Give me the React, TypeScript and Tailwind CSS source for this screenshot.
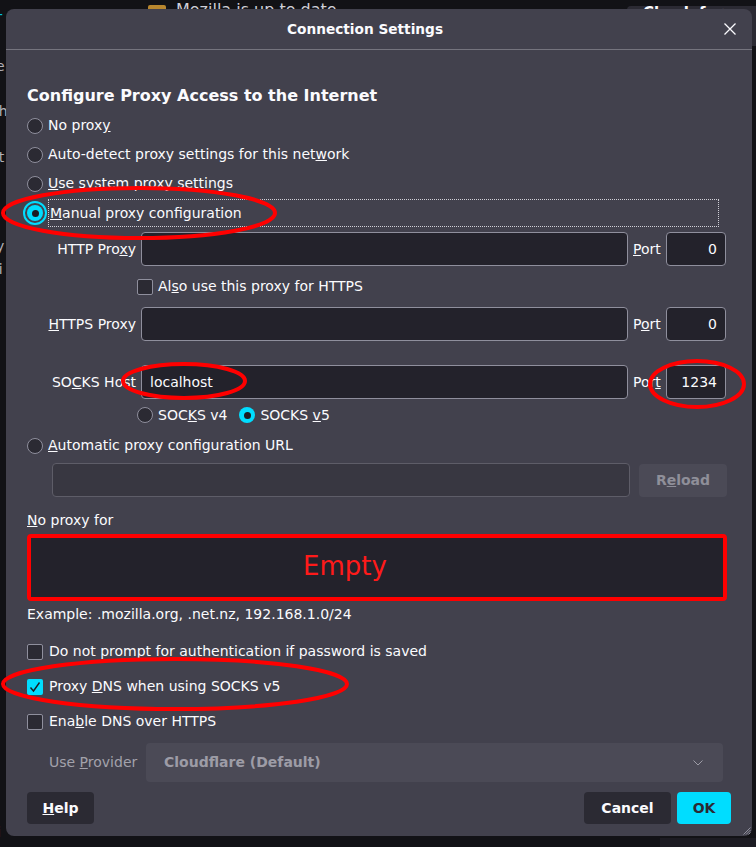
import React from 'react';

const Radio = ({ checked, focused }: { checked?: boolean; focused?: boolean }) => (
  <span
    className={`relative flex h-[16px] w-[16px] shrink-0 items-center justify-center rounded-full ${
      checked ? 'bg-[#00ddff]' : 'border border-[#8f8f9d] bg-[#2b2a33]'
    } ${focused ? 'outline-2 outline-offset-2 outline-[#00ddff]' : ''}`}
  >
    {checked && <span className="h-[7px] w-[7px] rounded-full bg-[#1c1b22]" />}
  </span>
);

const Checkbox = ({ checked }: { checked?: boolean }) => (
  <span
    className={`flex h-[16px] w-[16px] shrink-0 items-center justify-center rounded-[2px] ${
      checked ? 'bg-[#00ddff]' : 'border border-[#8f8f9d] bg-[#2b2a33]'
    }`}
  >
    {checked && (
      <svg width="14" height="14" viewBox="0 0 14 14" fill="none">
        <path d="M2.5 7.5 L5.5 11 L11.5 2.5" stroke="#1c1b22" strokeWidth="1.4" />
      </svg>
    )}
  </span>
);

const TextBox = ({ w, value, right }: { w: string; value?: string; right?: boolean }) => (
  <div
    className={`flex h-[34px] items-center rounded-[4px] border border-[#8f8f9d] bg-[#23222b] px-[8px] ${w} ${
      right ? 'justify-end' : ''
    }`}
  >
    {value}
  </div>
);

const ProxyRow = ({ label, value, port, portLabel }: { label: React.ReactNode; value?: string; port: string; portLabel: React.ReactNode }) => (
  <div className="flex h-[34px] items-center">
    <span className="w-[109px] text-right">{label}</span>
    <div className="ml-[5px]">
      <TextBox w="w-[487px]" value={value} />
    </div>
    <span className="ml-[5px] w-[28px]">{portLabel}</span>
    <div className="ml-[5px]">
      <TextBox w="w-[60px]" value={port} right />
    </div>
  </div>
);

export default function App() {
  return (
    <div className="relative h-[847px] w-[756px] overflow-hidden bg-[#121216] font-['DejaVu_Sans',sans-serif] text-[14px] text-[#fbfbfe]">
      {/* page behind the dialog */}
      <div className="absolute left-[148px] top-[5px] h-[8px] w-[18px] rounded-[2px] bg-[#b8862e]" />
      <span className="absolute left-[176px] top-[-2px] text-[16px] leading-[24px] text-[#cfcfd8]">Mozilla is up to date</span>
      <div className="absolute left-[627px] top-[6px] h-[40px] w-[140px] rounded-[4px] bg-[#2b2a33] px-[16px] text-[15px] font-bold leading-[20px]">
        <span className="relative top-[-3px]">Check for updates</span>
      </div>
      <span className="absolute left-[-4px] top-[8px] text-[15px] leading-[20px] text-[#00c8e6]">r</span>
      <span className="absolute left-[-4px] top-[57px] text-[14px] leading-[18px] text-[#b0b0b8]">e</span>
      <span className="absolute left-[-9px] top-[102px] text-[14px] leading-[18px] text-[#b0b0b8]">ch</span>
      <span className="absolute left-[-9px] top-[148px] text-[14px] leading-[18px] text-[#b0b0b8]">ct</span>
      <span className="absolute left-[-8px] top-[237px] text-[14px] leading-[18px] text-[#b0b0b8]">ly</span>
      <span className="absolute left-[-7px] top-[260px] text-[14px] leading-[18px] text-[#b0b0b8]">ri</span>
      <span className="absolute left-[-3px] top-[823px] text-[14px] leading-[18px] text-[#b0b0b8]">i</span>
      <div className="absolute left-[660px] top-[838px] h-[12px] w-[100px] bg-[#1c1b22]" />

      {/* dialog */}
      <div className="absolute left-[6px] top-[9px] flex h-[827px] w-[746px] flex-col rounded-[8px] bg-[#42414d]">
        <div className="flex h-[41px] shrink-0 items-center border-b border-[#75747e]">
          <div className="flex-1 text-center text-[13.7px] font-bold">Connection Settings</div>
          <svg width="12" height="12" viewBox="0 0 12 12" className="mr-[16px]">
            <path d="M0.5 0.5 L11.5 11.5 M11.5 0.5 L0.5 11.5" stroke="#fbfbfe" strokeWidth="1.3" />
          </svg>
        </div>

        <div className="flex flex-col px-[21px]">
          <div className="mt-[36px] h-[20px] text-[16px] font-bold leading-[20px]">Configure Proxy Access to the Internet</div>

          <div className="mt-[5px] flex h-[29px] items-center gap-[5px]">
            <Radio />
            <span>No prox<u>y</u></span>
          </div>
          <div className="flex h-[29px] items-center gap-[5px]">
            <Radio />
            <span>Auto-detect proxy settings for this net<u>w</u>ork</span>
          </div>
          <div className="flex h-[29px] items-center gap-[5px]">
            <Radio />
            <span><u>U</u>se system proxy settings</span>
          </div>
          <div className="flex h-[30px] items-center gap-[5px]">
            <Radio checked focused />
            <span className="flex h-[28px] w-[671px] items-center border border-dotted border-[#d0d0d8] pl-[1px]">
              <span><u>M</u>anual proxy configuration</span>
            </span>
          </div>

          <div className="mt-[4px]">
            <ProxyRow label={<>HTTP Pro<u>x</u>y</>} port="0" portLabel={<><u>P</u>ort</>} />
          </div>
          <div className="ml-[110px] flex h-[41px] items-center gap-[5px]">
            <Checkbox />
            <span>Al<u>s</u>o use this proxy for HTTPS</span>
          </div>
          <ProxyRow label={<><u>H</u>TTPS Proxy</>} port="0" portLabel={<>P<u>o</u>rt</>} />
          <div className="mt-[24px]">
            <ProxyRow label={<>SO<u>C</u>KS Host</>} value="localhost" port="1234" portLabel={<>Por<u>t</u></>} />
          </div>
          <div className="ml-[110px] flex h-[32px] items-center">
            <Radio />
            <span className="ml-[5px]">SOC<u>K</u>S v4</span>
            <span className="ml-[12px]"><Radio checked /></span>
            <span className="ml-[5px]">SOCKS <u>v</u>5</span>
          </div>
          <div className="flex h-[29px] items-center gap-[5px]">
            <Radio />
            <span><u>A</u>utomatic proxy configuration URL</span>
          </div>
          <div className="ml-[25px] mt-[3px] flex h-[34px] items-center">
            <div className="h-[34px] w-[578px] rounded-[4px] border border-[#5e5d68] bg-[#383741]" />
            <div className="ml-[9px] flex h-[33px] w-[88px] items-center justify-center rounded-[4px] bg-[#4b4a56] font-bold text-[#8f8f99]">
              <span>R<u>e</u>load</span>
            </div>
          </div>

          <div className="mt-[13px] h-[20px] leading-[20px]"><u>N</u>o proxy for</div>
          <div className="relative mt-[4px] h-[67px] w-[700px] rounded-[4px] border-[4px] border-[#ff0000] bg-[#23222b]">
            <span className="absolute left-[272px] top-[13px] text-[26px] leading-[30px] text-[#ff1a1a]">Empty</span>
          </div>
          <div className="mt-[3px] h-[20px] leading-[20px]">Example: .mozilla.org, .net.nz, 192.168.1.0/24</div>

          <div className="mt-[10px] flex h-[35px] items-center gap-[6px]">
            <Checkbox />
            <span>Do not prompt for authentication if password is saved</span>
          </div>
          <div className="flex h-[35px] items-center gap-[6px]">
            <Checkbox checked />
            <span>Proxy <u>D</u>NS when using SOCKS v5</span>
          </div>
          <div className="flex h-[35px] items-center gap-[6px]">
            <Checkbox />
            <span>Ena<u>b</u>le DNS over HTTPS</span>
          </div>

          <div className="mt-[4px] flex h-[39px] items-center">
            <span className="ml-[22px] w-[97px] text-[#a3a2ab]">Use <u>P</u>rovider</span>
            <div className="flex h-[39px] w-[577px] items-center justify-between rounded-[4px] bg-[#4b4a56] pl-[18px] pr-[20px] font-bold text-[#9d9ca6]">
              <span>Cloudflare (Default)</span>
              <svg width="10" height="6" viewBox="0 0 10 6" fill="none">
                <path d="M0.5 0.5 L5 5 L9.5 0.5" stroke="#9d9ca6" strokeWidth="1" />
              </svg>
            </div>
          </div>

          <div className="mt-[10px] flex h-[32px] items-center">
            <div className="flex h-[32px] w-[67px] items-center justify-center rounded-[4px] bg-[#2b2a33] font-bold">
              <span><u>H</u>elp</span>
            </div>
            <div className="flex-1" />
            <div className="flex h-[32px] w-[87px] items-center justify-center rounded-[4px] bg-[#2b2a33] font-bold">Cancel</div>
            <div className="ml-[6px] flex h-[32px] w-[54px] items-center justify-center rounded-[4px] bg-[#00ddff] font-bold text-[#2b2a33]">OK</div>
          </div>
        </div>

        <svg width="8" height="8" viewBox="0 0 8 8" className="absolute bottom-[1px] right-[1px]">
          <path d="M7.5 0.5 L0.5 7.5 M7.5 3 L3 7.5 M7.5 5.5 L5.5 7.5" stroke="#8f8f9d" strokeWidth="1" />
        </svg>
      </div>

      {/* red annotations */}
      <svg width="756" height="847" className="pointer-events-none absolute left-0 top-0">
        <g fill="none" stroke="#ff0000" strokeWidth="4">
          <ellipse cx="139" cy="213" rx="136" ry="25" />
          <ellipse cx="184" cy="381" rx="61" ry="17" />
          <ellipse cx="697" cy="384" rx="47" ry="23" />
          <ellipse cx="175" cy="684" rx="172" ry="25" />
        </g>
      </svg>
    </div>
  );
}
